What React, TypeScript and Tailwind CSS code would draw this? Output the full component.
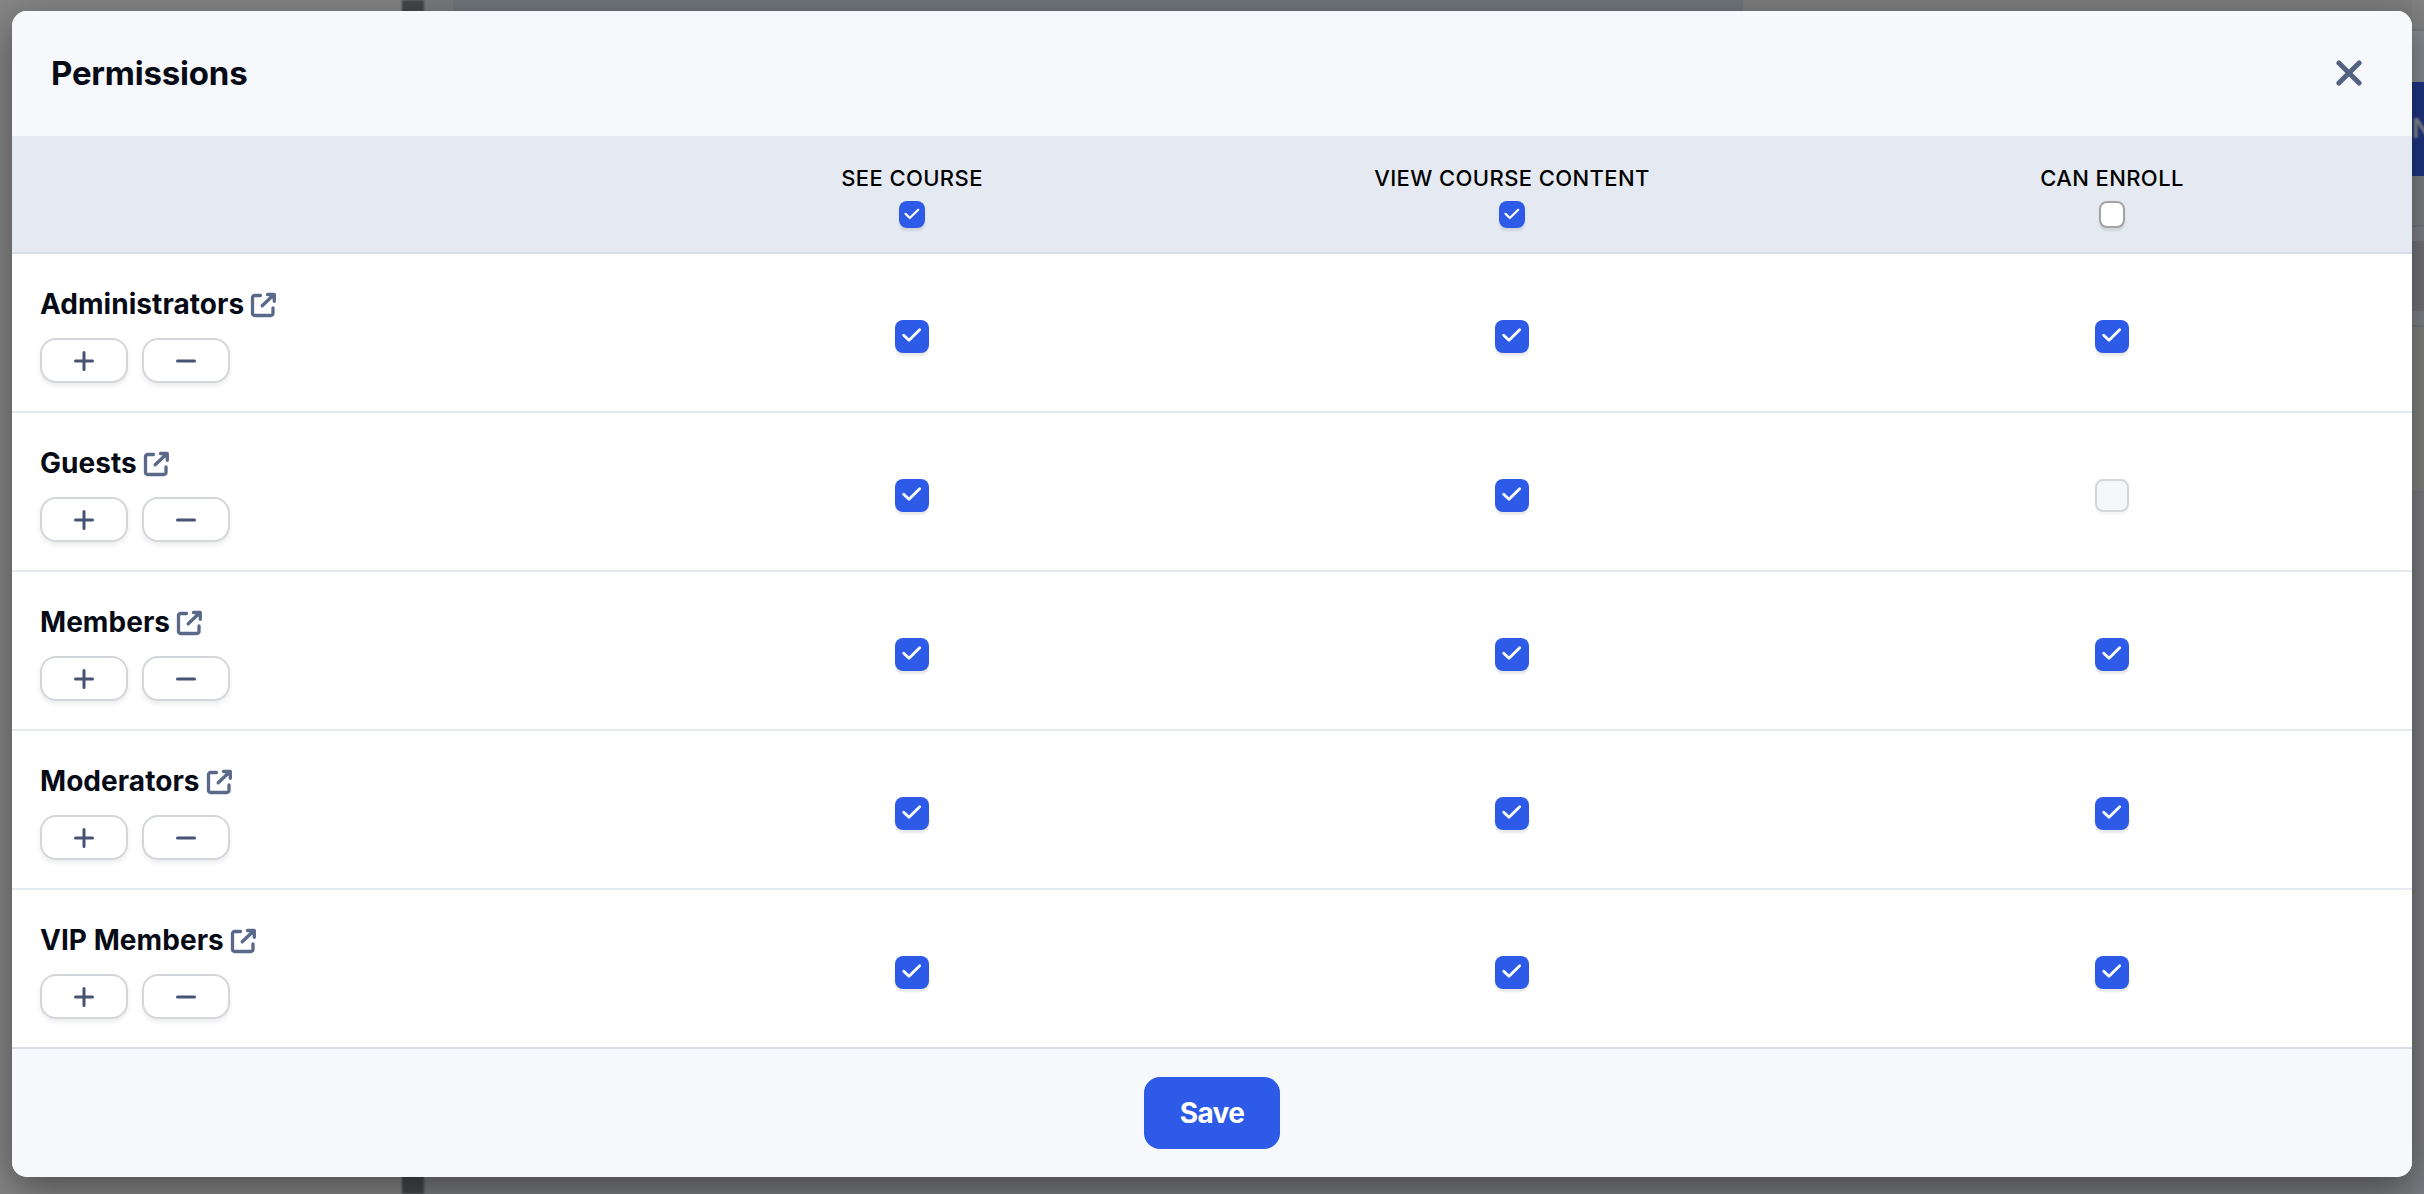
import { useState } from 'react'

const columns = ['See course', 'View course content', 'Can enroll']

const groups = [
    { name: 'Administrators', perms: [true, true, true], locked: [false, false, false] },
    { name: 'Guests', perms: [true, true, false], locked: [false, false, true] },
    { name: 'Members', perms: [true, true, true], locked: [false, false, false] },
    { name: 'Moderators', perms: [true, true, true], locked: [false, false, false] },
    { name: 'VIP Members', perms: [true, true, true], locked: [false, false, false] },
]

const ExternalIcon = () => (
    <svg width="26" height="26" viewBox="0 0 26 26" fill="none" stroke="#5a688a" strokeWidth="3.300" strokeLinecap="round" strokeLinejoin="round">
        <path d="M10.500 3.500H4.600A2.100 2.100 0 0 0 2.500 5.600V21.400A2.100 2.100 0 0 0 4.600 23.500H20.900A2.100 2.100 0 0 0 23 21.400V16" />
        <path d="M12.200 13.800L23 3.500M17.500 2.500H24.300V9.300" />
        <path d="M18.500 2.500H24.300V8.300Z" fill="#5a688a" stroke="none" />
    </svg>
)

const SmallCheckbox = ({ checked, onClick }: { checked: boolean; onClick: () => void }) => (
    <button
        onClick={onClick}
        className={`flex h-[27px] w-[26px] rounded-[8px] shadow-[0_3px_2px_rgba(0,0,0,0.09)] ${checked ? 'bg-[#2d5be7]' : 'border-2 border-[#a3a3a3] bg-white'}`}
    >
        {checked && (
            <svg width="26" height="27" viewBox="0 0 26 27" fill="none" stroke="#fff" strokeWidth="2.200" strokeLinecap="round" strokeLinejoin="round">
                <path d="M6.500 12.800L10.800 17L19.200 8.800" />
            </svg>
        )}
    </button>
)

const Checkbox = ({ checked, disabled, onClick }: { checked: boolean; disabled: boolean; onClick: () => void }) => (
    <button
        onClick={onClick}
        disabled={disabled}
        className={`flex h-[33px] w-[34px] rounded-[8px] ${
            checked
                ? 'bg-[#2d5be7] shadow-[0_3px_2px_rgba(0,0,0,0.09)]'
                : disabled
                  ? 'border-2 border-[#d4d6d9] bg-[#f6f7f9] shadow-[0_3px_2px_rgba(0,0,0,0.04)]'
                  : 'border-2 border-[#a3a3a3] bg-white shadow-[0_3px_2px_rgba(0,0,0,0.09)]'
        }`}
    >
        {checked && (
            <svg width="34" height="33" viewBox="0 0 34 33" fill="none" stroke="#fff" strokeWidth="2.800" strokeLinecap="round" strokeLinejoin="round">
                <path d="M8.700 15.200L14 20.300L24.700 9.800" />
            </svg>
        )}
    </button>
)

const RoundButton = ({ plus, onClick }: { plus?: boolean; onClick: () => void }) => (
    <button
        onClick={onClick}
        className="flex h-[45px] w-[88px] items-center justify-center rounded-[16px] border-2 border-[#d3d6db] bg-white shadow-[0_3px_5px_rgba(0,0,0,0.08)]"
    >
        <svg width="20" height="20" viewBox="0 0 20 20" fill="none" stroke="#475372" strokeWidth="3" strokeLinecap="round">
            <path d={plus ? 'M1.500 10H18.500M10 1.500V18.500' : 'M1.500 10H18.500'} />
        </svg>
    </button>
)

// Dimmed page behind the dialog
const Backdrop = () => (
    <div className="absolute inset-0 flex bg-[#7a7b7e]">
        <div className="w-[402px] bg-[#858585]" />
        <div className="w-[22px] bg-[#454648] blur-[1px]" />
        <div className="flex grow">
            <div className="ml-[29px] h-[77px] w-[1290px] bg-[#6f757b]" />
            <div className="h-[77px] grow bg-[#7d7d7d]" />
        </div>
        <div className="flex w-[12px] flex-col bg-[#7b7c81]">
            <div className="h-[31px] border-b-2 border-[#787a7e] bg-[#808180]" />
            <div className="h-[51px] bg-[#838b8f]" />
            <div className="flex h-[94px] items-center overflow-hidden bg-[#1f3482] font-semibold">
                <span className="text-[27px] text-[#8b8d8c] blur-[1px]">N</span>
            </div>
            <div className="h-[51px] border-b-2 border-[#76777b] bg-[#7d7e82]" />
            <div className="h-[14px] bg-[#808187]" />
            <div className="h-[70px] bg-[#737478]" />
            <div className="h-[14px] bg-[#808187]" />
            <div className="h-[168px] border-y-2 border-[#78787d] bg-[#80807f]" />
        </div>
    </div>
)

const App = () => {
    const [header, setHeader] = useState([true, true, false])
    const [rows, setRows] = useState(groups)

    const toggleColumn = (col: number) => {
        const value = !header[col]
        setHeader(header.map((h, i) => (i === col ? value : h)))
        setRows(rows.map((r) => ({ ...r, perms: r.perms.map((p, i) => (i === col && !r.locked[i] ? value : p)) })))
    }

    const toggleCell = (row: number, col: number) => {
        setRows(rows.map((r, i) => (i === row ? { ...r, perms: r.perms.map((p, j) => (j === col ? !p : p)) } : r)))
    }

    const setRow = (row: number, value: boolean) => {
        setRows(rows.map((r, i) => (i === row ? { ...r, perms: r.perms.map((p, j) => (r.locked[j] ? p : value)) } : r)))
    }

    return (
        <div className="relative h-[1194px] w-[2424px] overflow-hidden font-['Inter',sans-serif]">
            <Backdrop />
            <div className="relative px-3 pt-[11px]">
                <div className="flex h-[1166px] flex-col overflow-hidden rounded-[15px] bg-white shadow-[0_12px_38px_rgba(0,0,0,0.42)]">
                    <div className="flex h-[125px] items-center justify-between bg-[#f7f8fc] pr-[50px] pb-px pl-[39px]">
                        <h1 className="pt-[2px] text-[33px] font-bold tracking-[-0.2px] text-[#060b16]">Permissions</h1>
                        <button>
                            <svg width="26" height="26" viewBox="0 0 26 26" fill="none" stroke="#546282" strokeWidth="5" strokeLinecap="round">
                                <path d="M2.900 2.900L23.100 23.100M23.100 2.900L2.900 23.100" />
                            </svg>
                        </button>
                    </div>
                    <div className="grid h-[118px] grid-cols-4 border-b-2 border-[#d9dde8] bg-[#e5eaf2]">
                        <div></div>
                        {columns.map((title, i) => (
                            <div key={title} className="flex flex-col items-center pt-[26px]">
                                <span className="mb-[7px] text-[22px] leading-8 font-medium tracking-[0.4px] text-black uppercase">{title}</span>
                                <SmallCheckbox checked={header[i]} onClick={() => toggleColumn(i)} />
                            </div>
                        ))}
                    </div>
                    {rows.map((row, r) => (
                        <div
                            key={row.name}
                            className={`grid h-[159px] grid-cols-4 items-center border-b-2 ${r === rows.length - 1 ? 'border-[#d9dde8]' : 'border-[#e5eaf0]'}`}
                        >
                            <div className="flex flex-col gap-[17px] pt-[7px] pl-7">
                                <div className="flex h-8 items-center gap-[6px]">
                                    <span className="pb-[2px] text-[28px] leading-8 font-bold tracking-[0.05px] text-[#060b16]">{row.name}</span>
                                    <ExternalIcon />
                                </div>
                                <div className="flex gap-[14px]">
                                    <RoundButton plus onClick={() => setRow(r, true)} />
                                    <RoundButton onClick={() => setRow(r, false)} />
                                </div>
                            </div>
                            {row.perms.map((checked, c) => (
                                <div key={c} className="flex justify-center pt-[8px]">
                                    <Checkbox checked={checked} disabled={row.locked[c]} onClick={() => toggleCell(r, c)} />
                                </div>
                            ))}
                        </div>
                    ))}
                    <div className="flex h-[128px] items-center justify-center bg-[#f7f8fc]">
                        <button className="h-[72px] w-[136px] rounded-[16px] bg-[#2d5be7] text-[28px] font-bold tracking-[-0.6px] text-white">Save</button>
                    </div>
                </div>
            </div>
        </div>
    )
}

export default App
